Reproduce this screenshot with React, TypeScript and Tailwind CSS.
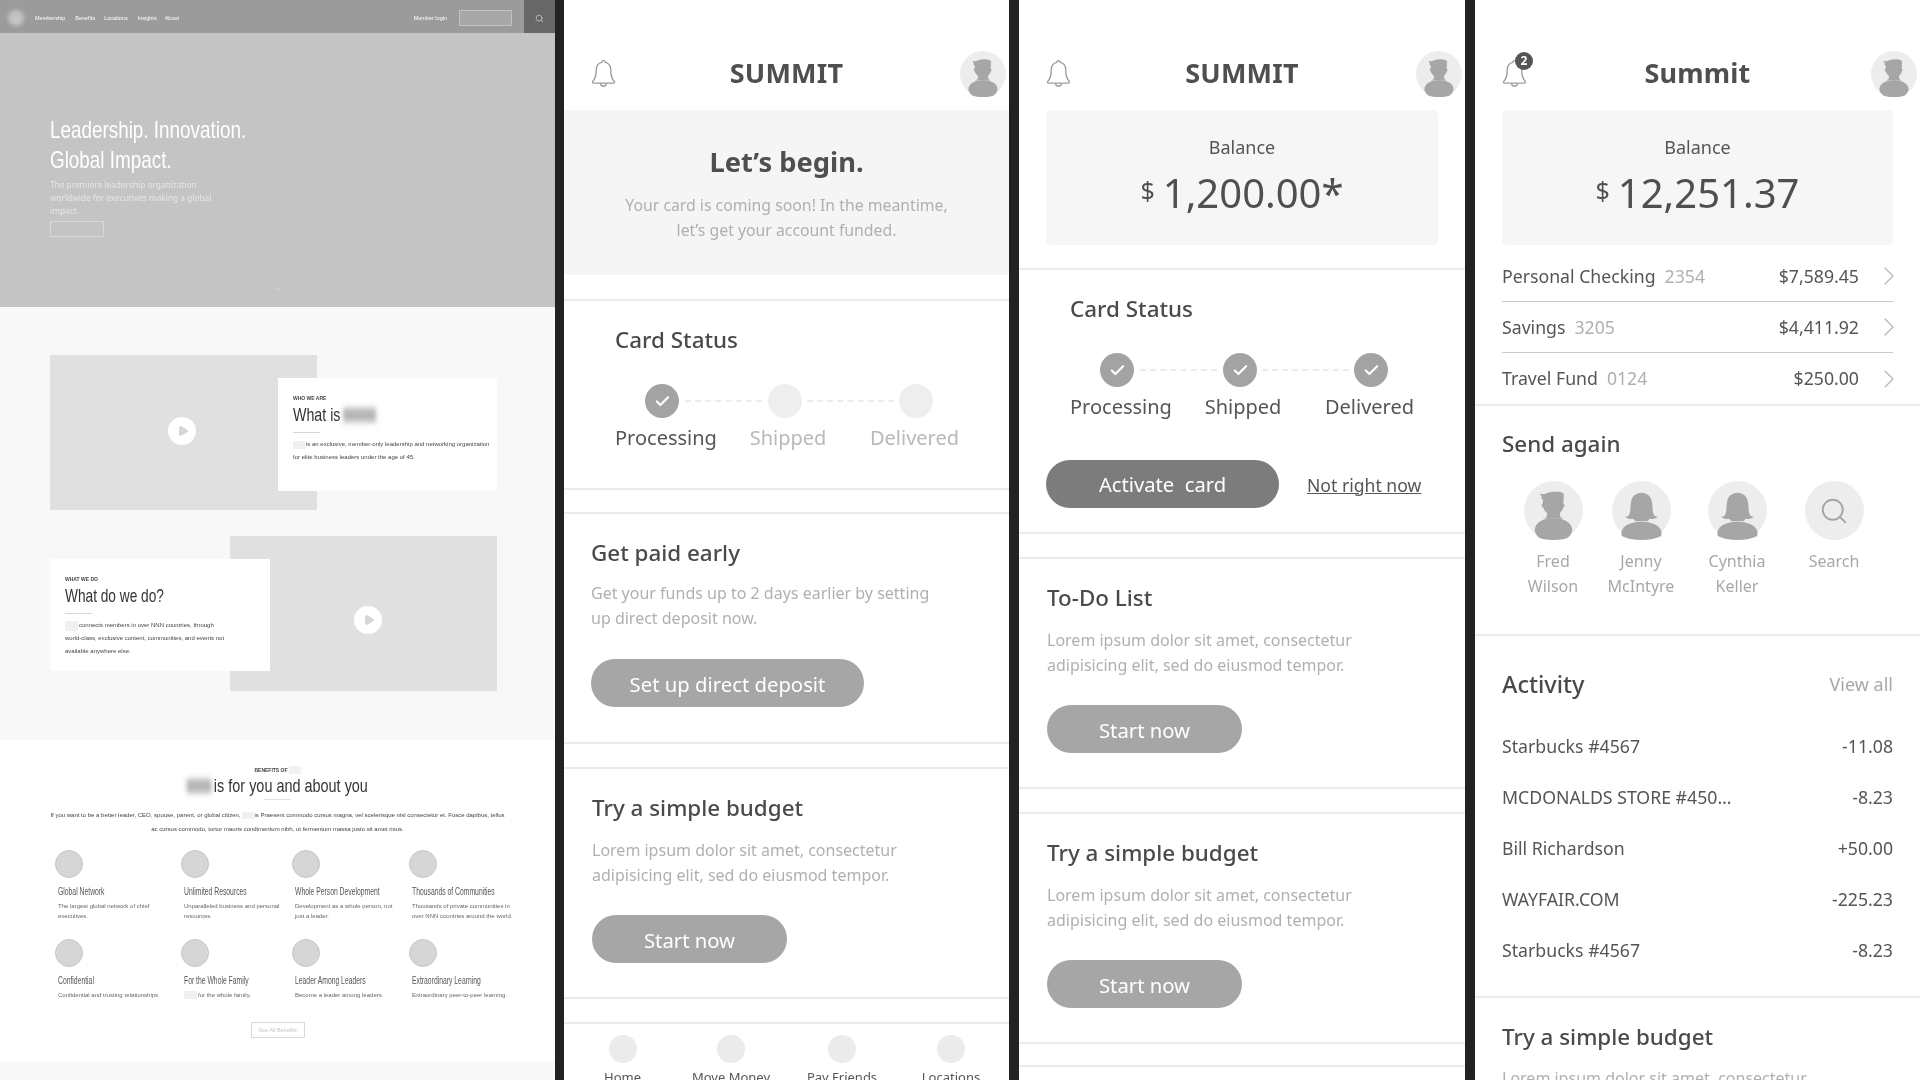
import { Check, ChevronDown, ChevronRight, Play, Search } from "lucide-react";

const benefits = [
  { title: "Global Network", desc: ["The largest global network of chief", "executives."] },
  { title: "Unlimited Resources", desc: ["Unparalleled business and personal", "resources."] },
  { title: "Whole Person Development", desc: ["Development as a whole person, not", "just a leader."] },
  { title: "Thousands of Communities", desc: ["Thousands of private communities in", "over NNN countries around the world."] },
  { title: "Confidential", desc: ["Confidential and trusting relationships."] },
  { title: "For the Whole Family", desc: ["for the whole family."], redacted: true },
  { title: "Leader Among Leaders", desc: ["Become a leader among leaders."] },
  { title: "Extraordinary Learning", desc: ["Extraordinary peer-to-peer learning."] },
];

const accounts = [
  { name: "Personal Checking", num: "2354", amount: "$7,589.45" },
  { name: "Savings", num: "3205", amount: "$4,411.92" },
  { name: "Travel Fund", num: "0124", amount: "$250.00" },
];

const activity = [
  ["Starbucks #4567", "-11.08"],
  ["MCDONALDS STORE #450…", "-8.23"],
  ["Bill Richardson", "+50.00"],
  ["WAYFAIR.COM", "-225.23"],
  ["Starbucks #4567", "-8.23"],
];

function BellIcon() {
  return (
    <svg viewBox="0 0 24 28" className="h-[29px] w-[25px]" fill="none" stroke="#9c9c9c" strokeWidth="1.3">
      <path d="M12 1.5c-1 0-1.6.7-1.6 1.7C6.8 4 5 7 5 10.500c0 5-1 8.500-3.300 11-.7.8-.3 1.800.8 1.800h19c1.100 0 1.500-1 .8-1.800C20 19 19 15.500 19 10.500c0-3.500-1.800-6.500-5.400-7.300 0-1-.6-1.700-1.600-1.700z" />
      <path d="M9 23.500c.3 1.700 1.500 2.800 3 2.800s2.700-1.100 3-2.800" />
    </svg>
  );
}

function ManAvatar({ size }: { size: string }) {
  return (
    <svg viewBox="0 0 60 60" className={size}>
      <circle cx="30" cy="30" r="30" fill="#ededed" />
      <path
        d="M16 13l5 .5c2-2 8-3 14-2.500 3 .2 5 1 5.500 3l-.5 9c1.500.5 1.500 3 0 4-.5 2-2 4-3.500 5.500l.5 4c1 1 3 2 4 2H19c1-.5 3-1 4-2l.5-4c-2-1.500-3.500-3.500-4-5.500-1.500-1-2-3-.5-4.500l.5-3-2-2 .5-2z"
        fill="#a6a6a6"
      />
      <path d="M16 58c-4-3-6-7-4.500-11 1.500-5 8-9 18.500-9s17 4 18.500 9c1.500 4-.5 8-4.500 11-4 1.500-8 2-14 2s-10-.5-14-2z" fill="#a6a6a6" />
    </svg>
  );
}

function WomanAvatar({ size }: { size: string }) {
  return (
    <svg viewBox="0 0 60 60" className={size}>
      <circle cx="30" cy="30" r="30" fill="#ededed" />
      <path
        d="M30 12c7 0 10.500 5 11 12 .3 5 .5 9 2 11 .8 1 2.500 1.200 3.500 1.200-1.500 2.300-5 3-8 2.300L36 41H24l-2.500-2.500c-3 .7-6.500 0-8-2.300 1 0 2.700-.2 3.500-1.200 1.500-2 1.700-6 2-11 .5-7 4-12 11-12z"
        fill="#a6a6a6"
      />
      <path d="M10 56c-1.500-5 1-10 8-12.500 3-1 8-2 12-2s9 1 12 2c7 2.500 9.500 7.500 8 12.500-5 3-12 4-20 4s-15-1-20-4z" fill="#a6a6a6" />
    </svg>
  );
}

function Header({ title, badge }: { title: string; badge?: string }) {
  return (
    <div className="grid h-[110px] shrink-0 grid-cols-[1fr_auto_1fr] items-center px-[3px] pt-[37px]">
      <div className="relative ml-[24px] h-[29px] w-[25px]">
        <BellIcon />
        {badge && (
          <span className="absolute -top-[7px] left-[13px] flex h-[18px] w-[18px] items-center justify-center rounded-full bg-[#555555] text-[12px] font-bold leading-none text-white">
            {badge}
          </span>
        )}
      </div>
      <h1 className="-translate-y-[1px] text-[27px] font-bold leading-none tracking-[0.2px] text-[#4f4f4f]">{title}</h1>
      <div className="justify-self-end">
        <ManAvatar size="h-[46px] w-[46px]" />
      </div>
    </div>
  );
}

function Balance({ amount }: { amount: string }) {
  return (
    <div className="mx-[27px] h-[135px] shrink-0 rounded-[5px] bg-[#f6f6f6] pt-[24px] text-center">
      <p className="text-[18px] leading-[26px] text-[#555555]">Balance</p>
      <div className="mt-[8px] flex items-center justify-center gap-[8px] text-[#4f4f4f]">
        <span className="-mt-[6px] text-[25px] leading-none">$</span>
        <span className="text-[40px] leading-[50px]">{amount}</span>
      </div>
    </div>
  );
}

function Stepper({ done }: { done: boolean[] }) {
  const labels = ["Processing", "Shipped", "Delivered"];
  const widths = ["w-[101px]", "ml-[22px] w-[100px]", "ml-[26px] w-[101px]"];
  return (
    <div className="pl-[51px]">
      <h2 className="text-[22.400px] font-medium leading-[30px] text-[#4a4a4a]">Card Status</h2>
      <div className="mt-[29px] flex items-center pl-[30px]">
        <Dot on={done[0]} />
        <span className="mx-[6px] w-[77px] border-t-2 border-dashed border-[#ececec]" />
        <Dot on={done[1]} />
        <span className="mx-[5px] w-[87px] border-t-2 border-dashed border-[#ececec]" />
        <Dot on={done[2]} />
      </div>
      <div className="mt-[6px] flex">
        {labels.map((label, i) => (
          <span
            key={label}
            className={`${widths[i]} whitespace-nowrap text-center text-[20px] leading-[28px] ${done[i] ? "text-[#555555]" : "text-[#b9b9b9]"}`}
          >
            {label}
          </span>
        ))}
      </div>
    </div>
  );
}

function Dot({ on }: { on: boolean }) {
  return (
    <span className={`flex h-[34px] w-[34px] shrink-0 items-center justify-center rounded-full ${on ? "bg-[#a3a3a3]" : "bg-[#eeeeee]"}`}>
      {on && <Check className="h-[17px] w-[17px] text-white" strokeWidth={3} />}
    </span>
  );
}

function ActionCard({ title, lines, cta, width, lorem }: { title: string; lines: string[]; cta: string; width: string; lorem?: boolean }) {
  return (
    <section className={`h-[232px] shrink-0 border-y-2 border-[#ebebeb] pt-[24px] ${lorem ? "pl-[28px]" : "pl-[27px]"}`}>
      <h2 className="text-[22.400px] font-medium leading-[30px] text-[#4a4a4a]">{title}</h2>
      <div className={`text-[16px] leading-[25px] text-[#b0b0b0] ${lorem ? "mt-[15px]" : "mt-[13px]"}`}>
        {lines.map((l) => (
          <p key={l}>{l}</p>
        ))}
      </div>
      <button className={`h-[48px] rounded-full bg-[#a6a6a6] pt-[2px] text-[20.300px] text-white ${width} ${lorem ? "mt-[27px]" : "mt-[28px]"}`}>
        {cta}
      </button>
    </section>
  );
}

function VideoBox({ playClass }: { playClass: string }) {
  return (
    <div className="flex h-[155px] w-[267px] shrink-0 items-center justify-center bg-[#e0e0e0]">
      <span className={`flex h-[28px] w-[28px] items-center justify-center rounded-full bg-white ${playClass}`}>
        <Play className="ml-[2px] h-[12px] w-[12px] fill-[#d6d6d6] text-[#d6d6d6]" />
      </span>
    </div>
  );
}

function WebsiteColumn() {
  return (
    <div className="flex h-full w-[555px] shrink-0 flex-col overflow-hidden bg-[#f8f8f8] font-['Liberation_Sans',sans-serif] blur-[0.4px]">
      <nav className="flex h-[33px] shrink-0 items-center bg-[#9b9b9b] pl-[8px] pt-[3px] text-[5.500px] text-white">
        <span className="h-[16px] w-[16px] rounded-full bg-[#c4c4c4] blur-[2px]" />
        <span className="ml-[11px]">Membership</span>
        <span className="ml-[10px]">Benefits</span>
        <span className="ml-[9px]">Locations</span>
        <span className="ml-[10px]">Insights</span>
        <span className="ml-[8px]">About</span>
        <span className="ml-auto">Member login</span>
        <span className="ml-[12px] h-[16px] w-[53px] border border-[#c2c2c2] bg-[#a8a8a8]" />
        <span className="-mt-[3px] ml-[12px] flex h-[33px] w-[31px] items-center justify-center bg-[#676767]">
          <Search className="mt-[3px] h-[9px] w-[9px] text-[#c9c9c9]" />
        </span>
      </nav>

      <header className="h-[274px] shrink-0 bg-[#c4c4c4] pl-[50px] pt-[82px] text-white">
        <h1 className="origin-left scale-x-[0.786] whitespace-nowrap text-[24px] leading-[30px]">
          Leadership. Innovation.
          <br />
          Global Impact.
        </h1>
        <p className="mt-[3px] w-[172px] font-['Noto_Sans',sans-serif] text-[8.300px] leading-[13px] text-[#e6e6e6]">
          The premiere leadership organization worldwide for executives making a global impact.
        </p>
        <span className="mt-[4px] block h-[16px] w-[54px] border border-[#d8d8d8]" />
        <ChevronDown className="ml-[222px] mt-[46px] h-[12px] w-[12px] text-[#dcdcdc]" />
      </header>

      <section className="h-[433px] shrink-0 px-[50px] pt-[48px]">
        <div className="flex items-start">
          <VideoBox playClass="-translate-x-[2px] -translate-y-[2px]" />
          <div className="-ml-[39px] mt-[23px] h-[113px] w-[219px] bg-white pl-[15px] pt-[17px] text-[#444444]">
            <p className="text-[5px] font-bold leading-[6px]">WHO WE ARE</p>
            <h2 className="mt-[3px] flex origin-left scale-x-[0.77] items-center whitespace-nowrap text-[18.500px] leading-[22px] text-[#333333]">
              What is
              <span className="ml-[3px] h-[14px] w-[43px] bg-[#b5b5b5] blur-[3px]" />
            </h2>
            <span className="mt-[6px] block h-px w-[27px] bg-[#d5d5d5]" />
            <p className="mt-[5px] flex items-center text-[6px] leading-[13px]">
              <span className="mr-[1px] h-[8px] w-[12px] bg-[#f0f0f0]" />
              is an exclusive, member-only leadership and networking organization
            </p>
            <p className="text-[6px] leading-[13px]">for elite business leaders under the age of 45.</p>
          </div>
        </div>
        <div className="mt-[26px] flex items-start">
          <div className="relative z-10 mt-[23px] h-[112px] w-[220px] shrink-0 bg-white pl-[15px] pt-[17px] text-[#444444]">
            <p className="text-[5px] font-bold leading-[6px]">WHAT WE DO</p>
            <h2 className="mt-[3px] origin-left scale-x-[0.74] whitespace-nowrap text-[18.500px] leading-[22px] text-[#333333]">What do we do?</h2>
            <span className="mt-[6px] block h-px w-[27px] bg-[#d5d5d5]" />
            <p className="mt-[5px] flex items-center text-[6px] leading-[13px]">
              <span className="mr-[1px] h-[10px] w-[13px] bg-[#f0f0f0]" />
              connects members in over NNN countries, through
            </p>
            <p className="text-[6px] leading-[13px]">world-class, exclusive content, communities, and events not</p>
            <p className="text-[6px] leading-[13px]">available anywhere else.</p>
          </div>
          <div className="-ml-[40px]">
            <VideoBox playClass="translate-x-[4px] translate-y-[6px]" />
          </div>
        </div>
      </section>

      <section className="flex h-[322px] shrink-0 flex-col items-center bg-white pt-[26px] text-[#444444]">
        <p className="flex items-center text-[5px] font-bold leading-[6px]">
          BENEFITS OF
          <span className="ml-[1px] h-[8px] w-[12px] bg-[#f2f2f2]" />
        </p>
        <h2 className="mt-[1px] flex scale-x-[0.78] items-center whitespace-nowrap text-[18.500px] leading-[22px] text-[#333333]">
          <span className="mr-[3px] h-[14px] w-[32px] bg-[#b5b5b5] blur-[3px]" />
          is for you and about you
        </h2>
        <span className="mt-[2px] block h-px w-[27px] bg-[#e2e2e2]" />
        <p className="mt-[8px] flex items-center whitespace-nowrap text-[6px] leading-[14px]">
          If you want to be a better leader, CEO, spouse, parent, or global citizen,
          <span className="mx-[1px] h-[7px] w-[12px] bg-[#f0f0f0]" />
          is Praesent commodo cursus magna, vel scelerisque nisl consectetur et. Fusce dapibus, tellus
        </p>
        <p className="text-[6px] leading-[14px]">ac cursus commodo, tortor mauris condimentum nibh, ut fermentum massa justo sit amet risus.</p>
        <div className="mt-[14px] grid w-full grid-cols-[126px_111px_117px_1fr] pl-[58px]">
          {benefits.map((b) => (
            <div key={b.title} className="h-[89px]">
              <span className="-ml-[3px] block h-[28px] w-[28px] rounded-full border border-[#c6c6c6] bg-[#d6d6d6]" />
              <h3 className="mt-[9px] origin-left scale-x-[0.68] whitespace-nowrap text-[10px] leading-[10px] text-[#555555]">{b.title}</h3>
              <div className="mt-[4px] text-[6px] leading-[10px] text-[#666666]">
                {b.desc.map((l) => (
                  <p key={l} className="flex items-center whitespace-nowrap">
                    {b.redacted && <span className="mr-[1px] h-[8px] w-[13px] bg-[#f0f0f0]" />}
                    {l}
                  </p>
                ))}
              </div>
            </div>
          ))}
        </div>
        <span className="-mt-[6px] flex h-[16px] w-[54px] items-center justify-center border border-[#d8d8d8] text-[5.500px] text-[#c4c4c4]">
          See All Benefits
        </span>
      </section>
    </div>
  );
}

function OnboardingColumn() {
  return (
    <div className="flex h-full w-[445px] shrink-0 flex-col overflow-hidden bg-white blur-[0.3px]">
      <Header title="SUMMIT" />
      <div className="h-[165px] shrink-0 rounded-b-[4px] bg-[#f5f5f5] pt-[36px] text-center">
        <h2 className="text-[27.300px] font-bold leading-[32px] text-[#4f4f4f]">Let’s begin.</h2>
        <div className="mt-[15px] text-[15.800px] leading-[25px] text-[#b0b0b0]">
          <p>Your card is coming soon! In the meantime,</p>
          <p>let’s get your account funded.</p>
        </div>
      </div>
      <section className="mt-[24px] h-[191px] shrink-0 border-y-2 border-[#ebebeb] pt-[24px]">
        <Stepper done={[true, false, false]} />
      </section>
      <div className="h-[22px] shrink-0" />
      <ActionCard
        title="Get paid early"
        lines={["Get your funds up to 2 days earlier by setting", "up direct deposit now."]}
        cta="Set up direct deposit"
        width="w-[273px]"
      />
      <div className="h-[23px] shrink-0" />
      <ActionCard
        lorem
        title="Try a simple budget"
        lines={["Lorem ipsum dolor sit amet, consectetur", "adipisicing elit, sed do eiusmod tempor."]}
        cta="Start now"
        width="w-[195px]"
      />
      <div className="h-[23px] shrink-0" />
      <div className="grid shrink-0 grid-cols-[117px_100px_122px_96px] border-t-2 border-[#ebebeb] pt-[11px] text-center text-[13px] leading-[18px] text-[#555555]">
        {["Home", "Move Money", "Pay Friends", "Locations"].map((l) => (
          <div key={l} className="flex flex-col items-center whitespace-nowrap">
            <span className="h-[28px] w-[28px] rounded-full bg-[#ebebeb]" />
            <span className="mt-[5px]">{l}</span>
          </div>
        ))}
      </div>
    </div>
  );
}

function ActivateColumn() {
  return (
    <div className="ml-[10px] flex h-full w-[446px] shrink-0 flex-col overflow-hidden bg-white blur-[0.3px]">
      <Header title="SUMMIT" />
      <Balance amount="1,200.00*" />
      <section className="mt-[23px] h-[266px] shrink-0 border-y-2 border-[#ebebeb] pt-[24px]">
        <Stepper done={[true, true, true]} />
        <div className="mt-[39px] flex items-center pl-[27px]">
          <button className="h-[48px] w-[233px] rounded-full bg-[#7c7c7c] pt-[1px] text-[20.200px] text-white">Activate&nbsp; card</button>
          <a className="ml-[28px] pt-[2px] text-[17.600px] text-[#555555] underline">Not right now</a>
        </div>
      </section>
      <div className="h-[23px] shrink-0" />
      <ActionCard
        lorem
        title="To-Do List"
        lines={["Lorem ipsum dolor sit amet, consectetur", "adipisicing elit, sed do eiusmod tempor."]}
        cta="Start now"
        width="w-[195px]"
      />
      <div className="h-[23px] shrink-0" />
      <ActionCard
        lorem
        title="Try a simple budget"
        lines={["Lorem ipsum dolor sit amet, consectetur", "adipisicing elit, sed do eiusmod tempor."]}
        cta="Start now"
        width="w-[195px]"
      />
      <div className="h-[23px] shrink-0 border-b-2 border-[#ebebeb]" />
    </div>
  );
}

function DashboardColumn() {
  const people = [
    { first: "Fred", last: "Wilson", man: true, w: "w-[88px]" },
    { first: "Jenny", last: "McIntyre", man: false, w: "w-[88px]" },
    { first: "Cynthia", last: "Keller", man: false, w: "w-[104px]" },
  ];
  return (
    <div className="ml-[10px] flex h-full w-[445px] shrink-0 flex-col overflow-hidden bg-white blur-[0.3px]">
      <Header title="Summit" badge="2" />
      <Balance amount="12,251.37" />
      <div className="mx-[27px] mt-[6px] shrink-0">
        {accounts.map((a, i) => (
          <div key={a.name} className={`flex h-[51px] items-center text-[17.700px] text-[#555555] ${i < 2 ? "border-b border-[#c9c9c9]" : ""}`}>
            <span>{a.name}</span>
            <span className="ml-[9px] text-[#b0b0b0]">{a.num}</span>
            <span className="ml-auto">{a.amount}</span>
            <ChevronRight className="-mr-[12px] ml-[14px] h-[32px] w-[32px] text-[#b5b5b5]" strokeWidth={0.9} />
          </div>
        ))}
      </div>
      <section className="h-[230px] shrink-0 border-t-2 border-[#ebebeb] pl-[27px] pt-[23px]">
        <h2 className="text-[22.400px] font-medium leading-[30px] text-[#4a4a4a]">Send again</h2>
        <div className="mt-[22px] flex pl-[7px] text-center text-[16px] leading-[25px] text-[#a8a8a8]">
          {people.map((p) => (
            <div key={p.first} className={`flex flex-col items-center ${p.w}`}>
              {p.man ? <ManAvatar size="h-[59px] w-[59px]" /> : <WomanAvatar size="h-[59px] w-[59px]" />}
              <p className="mt-[9px]">{p.first}</p>
              <p>{p.last}</p>
            </div>
          ))}
          <div className="flex w-[90px] flex-col items-center">
            <span className="flex h-[59px] w-[59px] items-center justify-center rounded-full bg-[#ededed]">
              <Search className="h-[30px] w-[30px] text-[#a6a6a6]" strokeWidth={1.5} />
            </span>
            <p className="mt-[9px]">Search</p>
          </div>
        </div>
      </section>
      <section className="h-[364px] shrink-0 border-y-2 border-[#ebebeb] px-[27px] pt-[33px]">
        <div className="flex items-center justify-between">
          <h2 className="text-[23.500px] font-medium leading-[30px] text-[#4a4a4a]">Activity</h2>
          <span className="text-[18px] text-[#a8a8a8]">View all</span>
        </div>
        <div className="mt-[22px] text-[17.700px] text-[#555555]">
          {activity.map(([name, amount], i) => (
            <div key={i} className="flex h-[51px] items-center justify-between">
              <span>{name}</span>
              <span>{amount}</span>
            </div>
          ))}
        </div>
      </section>
      <section className="shrink-0 pl-[27px] pt-[24px]">
        <h2 className="text-[22.400px] font-medium leading-[30px] text-[#4a4a4a]">Try a simple budget</h2>
        <p className="mt-[14px] text-[16px] leading-[25px] text-[#b0b0b0]">Lorem ipsum dolor sit amet, consectetur</p>
      </section>
    </div>
  );
}

export default function App() {
  return (
    <div className="flex h-[1080px] w-[1920px] overflow-hidden bg-[#222222] font-['Noto_Sans',sans-serif]">
      <WebsiteColumn />
      <div className="ml-[9px]">
        <OnboardingColumn />
      </div>
      <ActivateColumn />
      <DashboardColumn />
    </div>
  );
}
